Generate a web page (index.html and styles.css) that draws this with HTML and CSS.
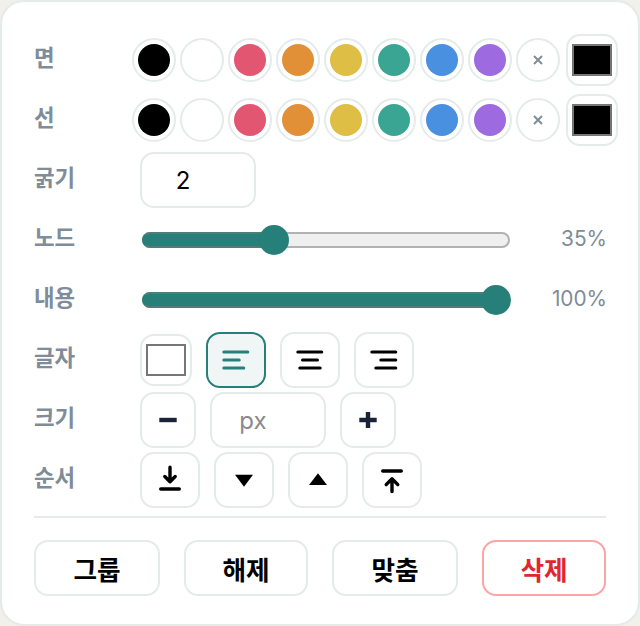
FILE: index.html

```html
<!DOCTYPE html>
<html lang="ko">
<head>
  <meta charset="UTF-8">
  <meta name="viewport" content="width=device-width, initial-scale=1.0">
  <title>Style Panel</title>
  <link rel="stylesheet" href="styles.css">
</head>
<body>
  <div class="panel">
    <div class="row">
      <div class="label">면</div>
      <div class="swatches">
        <div class="swatch"><span class="dot black"></span></div>
        <div class="swatch"><span class="dot white"></span></div>
        <div class="swatch"><span class="dot red"></span></div>
        <div class="swatch"><span class="dot orange"></span></div>
        <div class="swatch"><span class="dot yellow"></span></div>
        <div class="swatch"><span class="dot green"></span></div>
        <div class="swatch"><span class="dot blue"></span></div>
        <div class="swatch"><span class="dot purple"></span></div>
        <div class="swatch none">
          <svg width="12" height="12" viewBox="0 0 12 12"><path d="M2 2l8 8M10 2l-8 8" stroke="#7f8c99" stroke-width="2"/></svg>
        </div>
        <div class="picker"><span class="color-box black"></span></div>
      </div>
    </div>

    <div class="row">
      <div class="label">선</div>
      <div class="swatches">
        <div class="swatch"><span class="dot black"></span></div>
        <div class="swatch"><span class="dot white"></span></div>
        <div class="swatch"><span class="dot red"></span></div>
        <div class="swatch"><span class="dot orange"></span></div>
        <div class="swatch"><span class="dot yellow"></span></div>
        <div class="swatch"><span class="dot green"></span></div>
        <div class="swatch"><span class="dot blue"></span></div>
        <div class="swatch"><span class="dot purple"></span></div>
        <div class="swatch none">
          <svg width="12" height="12" viewBox="0 0 12 12"><path d="M2 2l8 8M10 2l-8 8" stroke="#7f8c99" stroke-width="2"/></svg>
        </div>
        <div class="picker"><span class="color-box black"></span></div>
      </div>
    </div>

    <div class="row">
      <div class="label">굵기</div>
      <input class="num-input" type="text" value="2">
    </div>

    <div class="row">
      <div class="label">노드</div>
      <div class="slider">
        <div class="slider-fill" style="width: 134px"></div>
        <div class="slider-thumb" style="left: 115px"></div>
      </div>
      <div class="value">35%</div>
    </div>

    <div class="row">
      <div class="label">내용</div>
      <div class="slider">
        <div class="slider-fill" style="width: 368px"></div>
        <div class="slider-thumb" style="left: 337px"></div>
      </div>
      <div class="value">100%</div>
    </div>

    <div class="row">
      <div class="label">글자</div>
      <div class="btn-group">
        <div class="picker text-color"><span class="color-box"></span></div>
        <div class="icon-btn active">
          <svg width="32" height="32" viewBox="0 0 32 32"><path d="M3.8 8h24M3.8 16h15.4M3.8 24h20" stroke="#267f78" stroke-width="3" stroke-linecap="round" fill="none"/></svg>
        </div>
        <div class="icon-btn">
          <svg width="32" height="32" viewBox="0 0 32 32"><path d="M3.8 8h24M8.5 16h15M5.8 24h20.4" stroke="#000" stroke-width="3" stroke-linecap="round" fill="none"/></svg>
        </div>
        <div class="icon-btn">
          <svg width="32" height="32" viewBox="0 0 32 32"><path d="M3.8 8h24M12.8 16h15M7.8 24h20" stroke="#000" stroke-width="3" stroke-linecap="round" fill="none"/></svg>
        </div>
      </div>
    </div>

    <div class="row">
      <div class="label">크기</div>
      <div class="btn-group">
        <div class="icon-btn square">
          <svg width="20" height="20" viewBox="0 0 20 20"><path d="M1.3 10h17.4" stroke="#1a2238" stroke-width="4.4"/></svg>
        </div>
        <input class="num-input" type="text" placeholder="px">
        <div class="icon-btn square">
          <svg width="20" height="20" viewBox="0 0 20 20"><path d="M1.3 10h17.4M10 2v16" stroke="#1a2238" stroke-width="4.4"/></svg>
        </div>
      </div>
    </div>

    <div class="row">
      <div class="label">순서</div>
      <div class="btn-group">
        <div class="icon-btn">
          <svg width="24" height="24" viewBox="0 0 24 24"><path d="M12 -0.8v14.5M6.8 8.5l5.2 5.2 5.2-5.2" stroke="#000" stroke-width="3.4" stroke-linecap="round" stroke-linejoin="round" fill="none"/><path d="M2.8 21h18.4" stroke="#000" stroke-width="3.6" stroke-linecap="round"/></svg>
        </div>
        <div class="icon-btn">
          <svg width="24" height="24" viewBox="0 0 24 24"><path d="M3 6.7h18l-9 12z" fill="#000"/></svg>
        </div>
        <div class="icon-btn">
          <svg width="24" height="24" viewBox="0 0 24 24"><path d="M3 17h18L12 5.3z" fill="#000"/></svg>
        </div>
        <div class="icon-btn">
          <svg width="24" height="24" viewBox="0 0 24 24"><path d="M2.8 3h18.4" stroke="#000" stroke-width="3.6" stroke-linecap="round"/><path d="M12 23.6V11M6.2 16.6l5.8-5.8 5.8 5.8" stroke="#000" stroke-width="3.4" stroke-linecap="round" stroke-linejoin="round" fill="none"/></svg>
        </div>
      </div>
    </div>

    <div class="divider"></div>

    <div class="actions">
      <div class="action-btn">그룹</div>
      <div class="action-btn">해제</div>
      <div class="action-btn">맞춤</div>
      <div class="action-btn danger">삭제</div>
    </div>
  </div>
</body>
</html>
```

FILE: styles.css

```css
body {
  margin: 0;
  background-color: #f1f0ea;
  font-family: Inter, "Noto Sans CJK KR", sans-serif;
}

svg {
  overflow: visible;
}

.panel {
  box-sizing: border-box;
  width: 640px;
  height: 626px;
  padding: 30px 32px 28px;
  background-color: #fff;
  border: 2px solid #e5eaea;
  border-radius: 24px;
  display: flex;
  flex-direction: column;
  gap: 4px;
}

.row {
  display: flex;
  align-items: center;
  height: 56px;
}

.label {
  flex: none;
  width: 106px;
  margin-top: -8px;
  font-size: 22.4px;
  font-weight: 700;
  color: #7f8c99;
}

.swatches {
  display: flex;
  align-items: center;
  gap: 4px;
  margin-left: -8px;
}

.swatch {
  box-sizing: border-box;
  flex: none;
  width: 44px;
  height: 44px;
  display: flex;
  align-items: center;
  justify-content: center;
  border: 2px solid #e5eaea;
  border-radius: 50%;
}

.dot {
  width: 32px;
  height: 32px;
  border-radius: 50%;
}

.black { background-color: #000; }
.white { background-color: #fff; }
.red { background-color: #e35672; }
.orange { background-color: #e19038; }
.yellow { background-color: #dfbe45; }
.green { background-color: #3ba594; }
.blue { background-color: #4a90e0; }
.purple { background-color: #9d6bdf; }

.picker {
  box-sizing: border-box;
  flex: none;
  width: 52px;
  height: 52px;
  display: flex;
  align-items: center;
  justify-content: center;
  border: 2px solid #e5eaea;
  border-radius: 14px;
}

.swatches .picker {
  margin-left: 2px;
}

.color-box {
  box-sizing: border-box;
  width: 40px;
  height: 32px;
  border: 2px solid #767676;
}

.num-input {
  box-sizing: border-box;
  width: 116px;
  height: 56px;
  padding: 0 30px 0 0;
  border: 2px solid #e5eaea;
  border-radius: 14px;
  background: #fff;
  outline: none;
  text-align: center;
  font-family: Inter, sans-serif;
  font-size: 24px;
  color: #000;
}

.num-input::placeholder {
  color: #8a8a8a;
}

.slider {
  position: relative;
  box-sizing: border-box;
  width: 368px;
  height: 16px;
  margin-left: 2px;
  background-color: #efefef;
  border: 2px solid #b2b2b2;
  border-radius: 8px;
}

.slider-fill {
  box-sizing: border-box;
  height: 16px;
  margin: -2px;
  background-color: #267f78;
  border: 2px solid #4f7d79;
  border-left-color: #267f78;
  border-right-color: #267f78;
  border-radius: 8px;
}

.slider-thumb {
  position: absolute;
  top: -9px;
  width: 30px;
  height: 30px;
  background-color: #267f78;
  border-radius: 50%;
}

.value {
  flex: 1;
  margin: -4px -1px 0 0;
  text-align: right;
  font-size: 20.8px;
  color: #7f8c99;
}

.btn-group {
  display: flex;
  align-items: center;
  gap: 14px;
}

.icon-btn {
  box-sizing: border-box;
  flex: none;
  width: 60px;
  height: 56px;
  display: flex;
  align-items: center;
  justify-content: center;
  border: 2px solid #e5eaea;
  border-radius: 14px;
}

.icon-btn.square {
  width: 56px;
}

.icon-btn.active {
  background-color: #eff6f5;
  border-color: #267f78;
}

.divider {
  flex: none;
  height: 2px;
  margin-top: 4px;
  background-color: #e5eaea;
}

.actions {
  display: grid;
  grid-template-columns: 126px 124px 126px 124px;
  gap: 24px;
  margin-top: 18px;
}

.action-btn {
  box-sizing: border-box;
  height: 56px;
  display: flex;
  align-items: center;
  justify-content: center;
  border: 2px solid #e5eaea;
  border-radius: 14px;
  font-size: 25.6px;
  font-weight: 700;
  color: #000;
}

.action-btn.danger {
  color: #e0262e;
  border-color: #fca5a5;
}
```
